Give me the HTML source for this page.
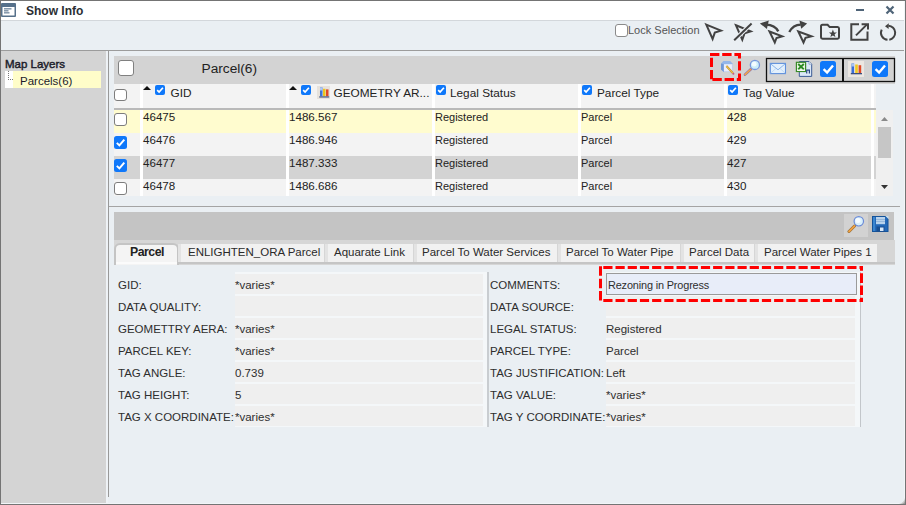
<!DOCTYPE html>
<html><head><meta charset="utf-8">
<style>
*{box-sizing:border-box;margin:0;padding:0}
html,body{width:906px;height:505px;overflow:hidden;background:#eaeff3;font-family:"Liberation Sans",sans-serif;font-size:11px;color:#222}
.a{position:absolute}
.t{position:absolute;white-space:nowrap;line-height:13px}
</style></head><body>
<!-- window frame -->

<!-- title bar -->
<div class="a" style="left:1px;top:1px;width:903px;height:19px;background:#fff"></div>
<div class="a" style="left:1px;top:20px;width:903px;height:1px;background:#d3d7db"></div>
<svg class="a" style="left:1px;top:3px" width="16" height="15" viewBox="0 0 16 15">
<rect x="0" y="0" width="15" height="14" rx="1" fill="#56708a"/>
<rect x="1.5" y="4" width="12" height="8.5" fill="#fff"/>
<rect x="3" y="5.3" width="7.5" height="1.1" fill="#56708a"/>
<rect x="3" y="7.3" width="4.5" height="1.1" fill="#56708a"/>
<rect x="3" y="9.3" width="5.5" height="1.1" fill="#56708a"/>
</svg>
<div class="t" style="left:26px;top:5px;font-size:12px;font-weight:bold;color:#2a2e33">Show Info</div>
<div class="a" style="left:856px;top:9px;width:8px;height:2px;background:#4f6478"></div>
<svg class="a" style="left:885px;top:5px" width="10" height="10" viewBox="0 0 10 10"><path d="M1.5 1.5L8.5 8.5M8.5 1.5L1.5 8.5" stroke="#4f6478" stroke-width="2.2"/></svg>

<!-- toolbar -->
<div class="a" style="left:615px;top:24px;width:13px;height:13px;border:1.5px solid #8a8a8a;border-radius:3px;background:#fff"></div>
<div class="t" style="left:628px;top:24px;color:#555">Lock Selection</div>

<!-- left panel -->
<div class="a" style="left:1px;top:51px;width:105px;height:452px;background:#d4d4d4"></div>
<div class="a" style="left:106px;top:51px;width:2px;height:452px;background:#eef2f6"></div>
<div class="a" style="left:108px;top:51px;width:1px;height:446px;background:#999"></div>
<div class="a" style="left:1px;top:50px;width:903px;height:1px;background:#9c9c9c"></div>
<div class="t" style="left:5px;top:58px;font-size:11.5px;-webkit-text-stroke:0.45px #1c1c2a;color:#1c1c2a">Map Layers</div>
<div class="a" style="left:5px;top:71px;width:96px;height:17px;background:#fffdc9"></div>
<div class="a" style="left:5px;top:71px;width:8px;height:17px;background:#fff"></div>
<div class="a" style="left:8px;top:71px;width:0;height:9px;border-left:1px dotted #777"></div>
<div class="a" style="left:8px;top:79px;width:5px;height:0;border-top:1px dotted #777"></div>
<div class="t" style="left:20px;top:75px;font-size:11.5px;color:#1c1c2a">Parcels(6)</div>

<!-- grid header band -->
<div class="a" style="left:114px;top:56px;width:781px;height:28px;background:#d3d3d3"></div>
<div class="a" style="left:118px;top:60px;width:16px;height:16px;border:1.5px solid #808080;border-radius:3px;background:#fff"></div>
<div class="t" style="left:201.5px;top:62px;font-size:13.7px;color:#222">Parcel(6)</div>

<!-- grid -->
<div class="a" style="left:114px;top:84px;width:762px;height:112px;overflow:hidden">
<div class="a" style="left:0;top:0;width:762px;height:24px;background:#f3f3f3"></div>
<div class="a" style="left:0;top:26px;width:762px;height:23px;background:#fffccf"></div>
<div class="a" style="left:0;top:49px;width:762px;height:23px;background:#f3f3f3"></div>
<div class="a" style="left:0;top:72px;width:762px;height:23px;background:#d3d3d3"></div>
<div class="a" style="left:0;top:95px;width:762px;height:23px;background:#f3f3f3"></div>
<div class="a" style="left:26px;top:0;width:3px;height:112px;background:#fff"></div>
<div class="a" style="left:172px;top:0;width:3px;height:112px;background:#fff"></div>
<div class="a" style="left:318px;top:0;width:3px;height:112px;background:#fff"></div>
<div class="a" style="left:464px;top:0;width:3px;height:112px;background:#fff"></div>
<div class="a" style="left:610px;top:0;width:3px;height:112px;background:#fff"></div>
<div class="a" style="left:757px;top:0;width:3px;height:112px;background:#fff"></div>
<div class="a" style="left:0;top:24px;width:762px;height:2px;background:#b9b9b9"></div>
<div class="t" style="left:29px;top:26px;font-size:11.6px">46475</div>
<div class="t" style="left:175px;top:26px;font-size:11.6px">1486.567</div>
<div class="t" style="left:321px;top:27px">Registered</div>
<div class="t" style="left:467px;top:27px">Parcel</div>
<div class="t" style="left:613px;top:26px;font-size:11.6px">428</div>
<div class="a" style="left:0;top:29px;width:13px;height:13px;border:1.5px solid #7d7d7d;border-radius:3px;background:#fff"></div>
<div class="t" style="left:29px;top:49px;font-size:11.6px">46476</div>
<div class="t" style="left:175px;top:49px;font-size:11.6px">1486.946</div>
<div class="t" style="left:321px;top:50px">Registered</div>
<div class="t" style="left:467px;top:50px">Parcel</div>
<div class="t" style="left:613px;top:49px;font-size:11.6px">429</div>
<svg class="a" style="left:0px;top:52px" width="13" height="13" viewBox="0 0 13 13"><rect width="13" height="13" rx="2.5" fill="#0f78fa"/><path d="M2.8 6.9L5.4 9.4L10.3 3.6" stroke="#fff" stroke-width="2" fill="none"/></svg>
<div class="t" style="left:29px;top:72px;font-size:11.6px">46477</div>
<div class="t" style="left:175px;top:72px;font-size:11.6px">1487.333</div>
<div class="t" style="left:321px;top:73px">Registered</div>
<div class="t" style="left:467px;top:73px">Parcel</div>
<div class="t" style="left:613px;top:72px;font-size:11.6px">427</div>
<svg class="a" style="left:0px;top:75px" width="13" height="13" viewBox="0 0 13 13"><rect width="13" height="13" rx="2.5" fill="#0f78fa"/><path d="M2.8 6.9L5.4 9.4L10.3 3.6" stroke="#fff" stroke-width="2" fill="none"/></svg>
<div class="t" style="left:29px;top:95px;font-size:11.6px">46478</div>
<div class="t" style="left:175px;top:95px;font-size:11.6px">1486.686</div>
<div class="t" style="left:321px;top:96px">Registered</div>
<div class="t" style="left:467px;top:96px">Parcel</div>
<div class="t" style="left:613px;top:95px;font-size:11.6px">430</div>
<div class="a" style="left:0;top:98px;width:13px;height:13px;border:1.5px solid #7d7d7d;border-radius:3px;background:#fff"></div>
</div>
<!-- header contents (absolute page coords) -->
<div class="a" style="left:114px;top:89px;width:13px;height:12px;border:1.5px solid #7d7d7d;border-radius:3px;background:#fff"></div>
<svg class="a" style="left:143px;top:86px" width="8" height="4"><path d="M0 4L4 0L8 4Z" fill="#111"/></svg>
<svg class="a" style="left:155px;top:85px" width="10" height="10" viewBox="0 0 10 10"><rect width="10" height="10" rx="2" fill="#0f78fa"/><path d="M2.2 5.2L4.1 7.1L7.9 2.7" stroke="#fff" stroke-width="1.7" fill="none"/></svg>
<div class="t" style="left:170.5px;top:87px;font-size:11.8px">GID</div>
<svg class="a" style="left:289px;top:86px" width="8" height="4"><path d="M0 4L4 0L8 4Z" fill="#111"/></svg>
<svg class="a" style="left:301px;top:85px" width="10" height="10" viewBox="0 0 10 10"><rect width="10" height="10" rx="2" fill="#0f78fa"/><path d="M2.2 5.2L4.1 7.1L7.9 2.7" stroke="#fff" stroke-width="1.7" fill="none"/></svg>
<svg class="a" style="left:317px;top:86px" width="13" height="13" viewBox="0 0 13 13"><rect width="13" height="13" fill="#e6e2dc"/><rect x="3" y="1.5" width="2.5" height="8.8" fill="#3f74d8"/><rect x="3" y="1.5" width="2.5" height="3" fill="#b0c8f0"/><rect x="6" y="2.8" width="2.5" height="7.5" fill="#ecc41e"/><rect x="9" y="3.4" width="2.5" height="6.9" fill="#e04828"/><rect x="2.2" y="10.3" width="10" height="1.3" fill="#4e5f8c"/></svg>
<div class="t" style="left:333.5px;top:87px;font-size:11.8px">GEOMETRY AR...</div>
<svg class="a" style="left:436px;top:85px" width="10" height="10" viewBox="0 0 10 10"><rect width="10" height="10" rx="2" fill="#0f78fa"/><path d="M2.2 5.2L4.1 7.1L7.9 2.7" stroke="#fff" stroke-width="1.7" fill="none"/></svg>
<div class="t" style="left:450px;top:87px;font-size:11.8px">Legal Status</div>
<svg class="a" style="left:582px;top:85px" width="10" height="10" viewBox="0 0 10 10"><rect width="10" height="10" rx="2" fill="#0f78fa"/><path d="M2.2 5.2L4.1 7.1L7.9 2.7" stroke="#fff" stroke-width="1.7" fill="none"/></svg>
<div class="t" style="left:597px;top:87px;font-size:11.8px">Parcel Type</div>
<svg class="a" style="left:728px;top:85px" width="10" height="10" viewBox="0 0 10 10"><rect width="10" height="10" rx="2" fill="#0f78fa"/><path d="M2.2 5.2L4.1 7.1L7.9 2.7" stroke="#fff" stroke-width="1.7" fill="none"/></svg>
<div class="t" style="left:743px;top:87px;font-size:11.8px">Tag Value</div>
<!-- scrollbar -->
<div class="a" style="left:876px;top:110px;width:17px;height:86px;background:#f0f0f0"></div>
<div class="a" style="left:878px;top:127px;width:13px;height:31px;background:#c6c6c6"></div>
<svg class="a" style="left:881px;top:117px" width="7" height="4"><path d="M0 4L3.5 0L7 4Z" fill="#8a8a8a"/></svg>
<svg class="a" style="left:881px;top:185px" width="7" height="4"><path d="M0 0L3.5 4L7 0Z" fill="#333"/></svg>
<!-- below grid line -->
<div class="a" style="left:109px;top:206px;width:791px;height:1px;background:#a4a4a4"></div>

<!-- detail -->
<div class="a" style="left:114px;top:212px;width:780px;height:28px;background:#c4c4c4"></div>
<div class="a" style="left:844px;top:214px;width:24px;height:23px;background:#d2d2d2"></div>
<svg class="a" style="left:847px;top:215px" width="18" height="18" viewBox="0 0 18 18"><path d="M2 16.5L7.5 11" stroke="#8a6a3a" stroke-width="3" stroke-linecap="round"/><path d="M2 16.5L7.5 11" stroke="#f0a040" stroke-width="1.8" stroke-linecap="round"/><circle cx="11.8" cy="6.3" r="4.7" fill="#d8f0fc" stroke="#6a8ad8" stroke-width="1.2"/><circle cx="11" cy="5.5" r="2.5" fill="#fff" opacity=".8"/></svg>
<svg class="a" style="left:872px;top:216px" width="17" height="16" viewBox="0 0 17 16"><path d="M0 0H13.5L16.5 3V16H0Z" fill="#14539a"/><rect x="1" y="1" width="14.5" height="14" fill="#2469b8"/><rect x="1" y="1" width="2" height="14" fill="#3a86d0"/><rect x="4" y="1" width="9" height="7.2" fill="#b9d3ec"/><rect x="4" y="3" width="9" height="0.8" fill="#8fb2d8"/><rect x="4" y="5.2" width="9" height="0.8" fill="#8fb2d8"/><rect x="4.5" y="10.5" width="8" height="5.5" fill="#1a4f90"/><rect x="8" y="11.5" width="3.5" height="3.5" fill="#d8e8f8"/><path d="M13.5 0H16.5V3Z" fill="#c8e0f0"/></svg>
<div class="a" style="left:114px;top:240px;width:781px;height:25px;background:#d6d6d6"></div>
<div class="a" style="left:114px;top:262px;width:781px;height:2px;background:#c5c5c5"></div>
<div class="a" style="left:114px;top:243px;width:65px;height:22px;background:#f4f4f4;border:2px solid #c4c4c4;border-bottom:none;border-radius:6px 6px 0 0"></div>
<div class="a" style="left:116px;top:262px;width:61px;height:2px;background:#fbfbfb"></div>
<div class="t" style="left:130px;top:246px;font-size:12.3px;letter-spacing:-0.5px;font-weight:bold;color:#222">Parcel</div>
<div class="a" style="left:178px;top:244px;width:3px;height:18px;background:#e3e3e3"></div>
<div class="a" style="left:181px;top:244px;width:143px;height:18px;background:#f1f1f1"></div>
<div class="t" style="left:188px;top:246px;font-size:11.5px;color:#2a2a2a">ENLIGHTEN_ORA Parcel</div>
<div class="a" style="left:325px;top:244px;width:3px;height:18px;background:#e3e3e3"></div>
<div class="a" style="left:328px;top:244px;width:85px;height:18px;background:#f1f1f1"></div>
<div class="t" style="left:334px;top:246px;font-size:11.5px;color:#2a2a2a">Aquarate Link</div>
<div class="a" style="left:414px;top:244px;width:3px;height:18px;background:#e3e3e3"></div>
<div class="a" style="left:417px;top:244px;width:140px;height:18px;background:#f1f1f1"></div>
<div class="t" style="left:422px;top:246px;font-size:11.5px;color:#2a2a2a">Parcel To Water Services</div>
<div class="a" style="left:558px;top:244px;width:3px;height:18px;background:#e3e3e3"></div>
<div class="a" style="left:561px;top:244px;width:119px;height:18px;background:#f1f1f1"></div>
<div class="t" style="left:566px;top:246px;font-size:11.5px;color:#2a2a2a">Parcel To Water Pipe</div>
<div class="a" style="left:681px;top:244px;width:3px;height:18px;background:#e3e3e3"></div>
<div class="a" style="left:684px;top:244px;width:70px;height:18px;background:#f1f1f1"></div>
<div class="t" style="left:689px;top:246px;font-size:11.5px;color:#2a2a2a">Parcel Data</div>
<div class="a" style="left:755px;top:244px;width:3px;height:18px;background:#e3e3e3"></div>
<div class="a" style="left:758px;top:244px;width:119px;height:18px;background:#f1f1f1"></div>
<div class="t" style="left:764px;top:246px;font-size:11.5px;color:#2a2a2a">Parcel Water Pipes 1</div>
<div class="a" style="left:235px;top:272px;width:252px;height:155px;background:#f4f7f9"></div>
<div class="a" style="left:487px;top:272px;width:2px;height:155px;background:#c9cdd1"></div>
<div class="a" style="left:606px;top:272px;width:254px;height:155px;background:#f4f7f9"></div>
<div class="a" style="left:860px;top:272px;width:1px;height:155px;background:#c2c6ca"></div>
<div class="a" style="left:235px;top:274px;width:248px;height:20px;background:#efefef"></div>
<div class="t" style="left:118px;top:279px;font-size:11.5px;color:#2e2e2e">GID:</div>
<div class="t" style="left:235px;top:279px;font-size:11.5px;color:#2e2e2e">*varies*</div>
<div class="a" style="left:235px;top:296px;width:248px;height:20px;background:#efefef"></div>
<div class="t" style="left:118px;top:301px;font-size:11.5px;color:#2e2e2e">DATA QUALITY:</div>
<div class="a" style="left:235px;top:318px;width:248px;height:20px;background:#efefef"></div>
<div class="t" style="left:118px;top:323px;font-size:11.5px;color:#2e2e2e">GEOMETTRY AERA:</div>
<div class="t" style="left:235px;top:323px;font-size:11.5px;color:#2e2e2e">*varies*</div>
<div class="a" style="left:235px;top:340px;width:248px;height:20px;background:#efefef"></div>
<div class="t" style="left:118px;top:345px;font-size:11.5px;color:#2e2e2e">PARCEL KEY:</div>
<div class="t" style="left:235px;top:345px;font-size:11.5px;color:#2e2e2e">*varies*</div>
<div class="a" style="left:235px;top:362px;width:248px;height:20px;background:#efefef"></div>
<div class="t" style="left:118px;top:367px;font-size:11.5px;color:#2e2e2e">TAG ANGLE:</div>
<div class="t" style="left:235px;top:367px;font-size:11.5px;color:#2e2e2e">0.739</div>
<div class="a" style="left:235px;top:384px;width:248px;height:20px;background:#efefef"></div>
<div class="t" style="left:118px;top:389px;font-size:11.5px;color:#2e2e2e">TAG HEIGHT:</div>
<div class="t" style="left:235px;top:389px;font-size:11.5px;color:#2e2e2e">5</div>
<div class="a" style="left:235px;top:406px;width:248px;height:20px;background:#efefef"></div>
<div class="t" style="left:118px;top:411px;font-size:11.5px;color:#2e2e2e">TAG X COORDINATE:</div>
<div class="t" style="left:235px;top:411px;font-size:11.5px;color:#2e2e2e">*varies*</div>
<div class="t" style="left:490px;top:279px;font-size:11.5px;color:#2e2e2e">COMMENTS:</div>
<div class="a" style="left:606px;top:273px;width:251px;height:22px;background:#e8edf9;border:1px solid #9a9a9a"></div>
<div class="t" style="left:608px;top:279px;font-size:10.9px;letter-spacing:-0.15px;color:#2e2e2e">Rezoning in Progress</div>
<div class="t" style="left:490px;top:301px;font-size:11.5px;color:#2e2e2e">DATA SOURCE:</div>
<div class="a" style="left:606px;top:296px;width:249px;height:20px;background:#efefef"></div>
<div class="t" style="left:490px;top:323px;font-size:11.5px;color:#2e2e2e">LEGAL STATUS:</div>
<div class="a" style="left:606px;top:318px;width:249px;height:20px;background:#efefef"></div>
<div class="t" style="left:606px;top:323px;font-size:11.5px;color:#2e2e2e">Registered</div>
<div class="t" style="left:490px;top:345px;font-size:11.5px;color:#2e2e2e">PARCEL TYPE:</div>
<div class="a" style="left:606px;top:340px;width:249px;height:20px;background:#efefef"></div>
<div class="t" style="left:606px;top:345px;font-size:11.5px;color:#2e2e2e">Parcel</div>
<div class="t" style="left:490px;top:367px;font-size:11.5px;color:#2e2e2e">TAG JUSTIFICATION:</div>
<div class="a" style="left:606px;top:362px;width:249px;height:20px;background:#efefef"></div>
<div class="t" style="left:606px;top:367px;font-size:11.5px;color:#2e2e2e">Left</div>
<div class="t" style="left:490px;top:389px;font-size:11.5px;color:#2e2e2e">TAG VALUE:</div>
<div class="a" style="left:606px;top:384px;width:249px;height:20px;background:#efefef"></div>
<div class="t" style="left:606px;top:389px;font-size:11.5px;color:#2e2e2e">*varies*</div>
<div class="t" style="left:490px;top:411px;font-size:11.5px;color:#2e2e2e">TAG Y COORDINATE:</div>
<div class="a" style="left:606px;top:406px;width:249px;height:20px;background:#efefef"></div>
<div class="t" style="left:606px;top:411px;font-size:11.5px;color:#2e2e2e">*varies*</div>

<!-- toolbar icons -->
<svg class="a" style="left:0;top:0" width="906" height="50" viewBox="0 0 906 50">
<g fill="none" stroke="#424242" stroke-width="2" stroke-linejoin="miter">
<path d="M706.3 24.6L721 30.6L714.8 32.6L712.6 39Z"/>
<path d="M736 25.3L750.7 31.3L744.5 33.3L742.3 39.7Z"/>
</g>
<path d="M733.6 40.8L752.2 22.9" stroke="#eaeff3" stroke-width="4.2"/>
<path d="M734.2 40.2L751.6 23.5" stroke="#424242" stroke-width="2"/>
<g fill="none" stroke="#424242" stroke-width="2">
<path d="M769.5 31.5L782.2 36.3L776.5 38L774.8 42.5Z"/>
<path d="M798.3 31.5L811.5 36.3L805.5 37.8L803.5 42.5Z"/>
</g>
<path d="M766 24.6Q775 24.8 778.3 31.4" fill="none" stroke="#424242" stroke-width="2.4"/>
<path d="M759.9 23.4L768.8 20.4L766.9 29Z" fill="#424242"/>
<path d="M789.3 32Q793 24.8 800.8 24.6" fill="none" stroke="#424242" stroke-width="2.4"/>
<path d="M807.1 23.4L799.4 20.4L801.2 28.8Z" fill="#424242"/>
<path d="M821 26.3Q821 24.8 822.5 24.8L827.6 24.8L829.7 27.1L837.6 27.1Q839 27.1 839 28.6L839 37.3Q839 38.7 837.6 38.7L822.5 38.7Q821 38.7 821 37.3Z" fill="none" stroke="#424242" stroke-width="2"/>
<path d="M832.9 29.6L834 32.4L836.9 32.5L834.6 34.3L835.4 37.1L832.9 35.5L830.4 37.1L831.2 34.3L828.9 32.5L831.8 32.4Z" fill="#424242"/>
<path d="M859 24.2L851.3 24.2L851.3 39.8L867.5 39.8L867.5 31.6" fill="none" stroke="#424242" stroke-width="2"/>
<path d="M856 35.4L866.8 24.6" stroke="#424242" stroke-width="2"/>
<path d="M861.6 24.2L868 24.2L868 29.6" fill="none" stroke="#424242" stroke-width="2"/>
<path d="M888.5 25.8A7 7 0 0 1 889.3 39.7" fill="none" stroke="#424242" stroke-width="2"/>
<path d="M887.5 39.7A7 7 0 0 1 881.7 29.6" fill="none" stroke="#424242" stroke-width="2"/>
<path d="M885 26.2L888.8 23.2L888.6 29Z" fill="#424242"/>
</svg>
<!-- header band icons -->
<svg class="a" style="left:700px;top:50px" width="200" height="36" viewBox="700 50 200 36">
<path d="M721 63.6L723.4 61L730.2 61L732.6 63.6L732.6 70L730.4 72L723.6 72L721 69.6Z" fill="#94b6ea"/>
<path d="M721 63.6L723.9 64.2V72L721 69.6Z" fill="#7098d8"/>
<rect x="723.9" y="64.2" width="8.5" height="7.6" fill="#eceffc"/>
<path d="M723.9 71.6H732.4V64.2" fill="none" stroke="#c4cfe8" stroke-width=".7"/>
<path d="M726.4 66L732.9 73.2" stroke="#b88a30" stroke-width="2"/>
<path d="M726.4 66L732.9 73.2" stroke="#f4c648" stroke-width="1.1"/>
<circle cx="733.4" cy="73.8" r="1" fill="#c85a80"/>
<path d="M745 74.6L750.8 69.3" stroke="#8a6aa8" stroke-width="2.6" stroke-linecap="round"/>
<path d="M745 74.6L750.8 69.3" stroke="#f2a848" stroke-width="1.5" stroke-linecap="round"/>
<circle cx="754.9" cy="64.9" r="4.6" fill="#cdeefa" stroke="#7896dc" stroke-width="1.3"/>
<circle cx="754.2" cy="64.2" r="2.4" fill="#f4fcff"/>
<rect x="766.5" y="58.5" width="128" height="23" fill="none" stroke="#111" stroke-width="1.3"/>
<path d="M843 58.5V81.5" stroke="#111" stroke-width="2"/>
<rect x="770.3" y="63.4" width="15.2" height="10.2" fill="#e3f0fc" stroke="#5f90dc" stroke-width="1.1"/>
<path d="M770.6 63.8L778 69.8L785.2 63.8" fill="none" stroke="#8ab4ea" stroke-width="1"/>
<path d="M770.6 73.2L776 68.4M785.2 73.2L780 68.4" stroke="#b8d4f2" stroke-width=".8"/>
<path d="M799.3 61.5L809 61.5L811.7 64.2L811.7 76.4L799.3 76.4Z" fill="#dce8f8" stroke="#3a5a94" stroke-width="1"/>
<path d="M809 61.5V64.2H811.7" fill="#f4f8ff" stroke="#6a86b8" stroke-width=".6"/>
<rect x="796.4" y="62.3" width="9.2" height="9.2" fill="#e8f4e4" stroke="#3a8a2a" stroke-width="1.2"/>
<path d="M798.2 64L803.8 69.4M803.8 64L798.2 69.4" stroke="#2a8a22" stroke-width="1.9"/>
<rect x="797" y="69.8" width="8" height="1" fill="#fff"/>
<path d="M806.7 73.4V70.2H809.4V73.4" fill="none" stroke="#2a4880" stroke-width="1.2"/>
<rect x="820" y="61" width="16" height="16" rx="2.5" fill="#0f78fa"/>
<path d="M823.6 69.2L827.1 72.6L833 65.6" stroke="#fff" stroke-width="2.4" fill="none"/>
<rect x="848" y="61" width="16" height="16" fill="#ece7e2"/>
<rect x="851.5" y="63.5" width="2.6" height="9.5" fill="#3a6ed8"/>
<rect x="851.5" y="63.5" width="2.6" height="3" fill="#a8c4f0"/>
<rect x="855.2" y="64.5" width="2.6" height="8.5" fill="#f0c820"/>
<rect x="858.6" y="65.2" width="2.6" height="7.8" fill="#e04a28"/>
<rect x="850.8" y="73" width="11.2" height="1.3" fill="#3a4e80"/>
<rect x="872" y="61" width="16" height="16" rx="2.5" fill="#0f78fa"/>
<path d="M875.6 69.2L879.1 72.6L885 65.6" stroke="#fff" stroke-width="2.4" fill="none"/>
</svg>
<!-- red dashed annotation boxes -->
<svg class="a" style="left:0;top:0" width="906" height="505" viewBox="0 0 906 505">
<g stroke="#ff0000" stroke-width="3" fill="none">
<path d="M710 54.5H741" stroke-dasharray="9.4 2.8"/>
<path d="M739.5 53V81" stroke-dasharray="9.4 2.8" stroke-dashoffset="4"/>
<path d="M712.4 79.5H741" stroke-dasharray="9.4 2.8"/>
<path d="M711.5 57.7V81" stroke-dasharray="9.4 2.8"/>
<path d="M600.5 266.3V302" stroke-dasharray="9.5 2.9"/>
<path d="M603.3 267.5H863" stroke-dasharray="9.2 3"/>
<path d="M861.5 266V302" stroke-dasharray="9.6 2.6" stroke-dashoffset="4.9"/>
<path d="M603.3 300.5H863" stroke-dasharray="9.2 3"/>
</g>
</svg>

<!-- frame -->
<div class="a" style="left:1px;top:503px;width:904px;height:1px;background:#f2f5f8"></div>
<div class="a" style="left:904px;top:1px;width:1px;height:503px;background:#f2f5f8"></div>
<svg class="a" style="left:899px;top:498px" width="6" height="6" viewBox="0 0 6 6"><path d="M6 0V6H0Q5 5 6 0Z" fill="#c8c8c8"/><path d="M6 3V6H3Q5.5 5.5 6 3Z" fill="#9a9a9a"/></svg>
<div class="a" style="left:0;top:0;width:906px;height:505px;border:1px solid #747474"></div>
</body></html>
